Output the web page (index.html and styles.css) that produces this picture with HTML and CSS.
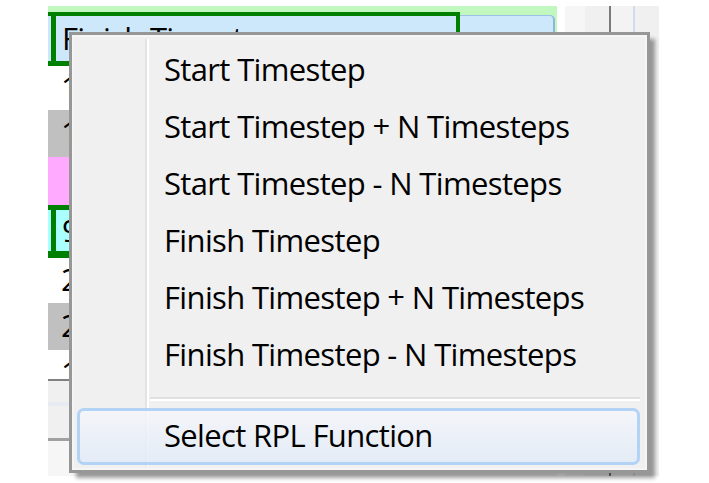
FILE: index.html
```html
<!DOCTYPE html>
<html>
<head>
<meta charset="utf-8">
<link rel="stylesheet" href="styles.css">
</head>
<body>
<div class="sheet">
  <div class="grid">
    <div class="toprow">
      <div class="gbox top">
        <div class="gcell">Finish Timestep</div>
      </div>
      <div class="hovercell"></div>
    </div>
    <div class="row white h44"><span class="txt">1</span></div>
    <div class="row gray h47"><span class="txt">1</span></div>
    <div class="row pink h48"></div>
    <div class="gbox cyan">
      <div class="gcell">9</div>
    </div>
    <div class="row white h45"><span class="txt">2</span></div>
    <div class="row gray h47"><span class="txt">2</span></div>
    <div class="row white cut"><span class="txt">1</span></div>
    <div class="footer">
      <div class="fband"></div>
      <div class="fline"></div>
      <div class="fband2"></div>
    </div>
  </div>
  <div class="side">
    <div class="scol light"></div>
    <div class="scol mid"></div>
    <div class="sline dark"></div>
    <div class="scol light2"></div>
    <div class="sline blue"></div>
    <div class="scol mid"></div>
  </div>
</div>

<div class="menu">
  <div class="item">Start Timestep</div>
  <div class="item">Start Timestep + N Timesteps</div>
  <div class="item">Start Timestep - N Timesteps</div>
  <div class="item">Finish Timestep</div>
  <div class="item">Finish Timestep + N Timesteps</div>
  <div class="item">Finish Timestep - N Timesteps</div>
  <div class="sep"></div>
  <div class="item hl">Select RPL Function</div>
</div>
</body>
</html>
```
FILE: styles.css
```css
html, body {
  margin: 0;
  padding: 0;
  background: #ffffff;
}
body {
  font-family: "Open Sans", "Noto Sans", sans-serif;
  font-size: 31px;
  letter-spacing: -0.65px;
  color: #000;
  width: 709px;
  height: 483px;
  overflow: hidden;
}
.sheet {
  display: flex;
  gap: 8px;
  margin: 6px 0 0 48px;
}
.grid {
  width: 509px;
  display: flex;
  flex-direction: column;
}
.toprow {
  height: 60px;
  background: #c0f8c0;
  display: flex;
  align-items: flex-end;
}
.gbox {
  box-sizing: border-box;
  display: flex;
  border-top: 4px solid #008000;
  border-bottom: 5px solid #008000;
  border-right: 4px solid #008000;
  background: #cce8fa;
}
.gbox.top {
  width: 412px;
  height: 54px;
}
.gbox.cyan {
  width: 509px;
  height: 53px;
  border-top-width: 5px;
  border-bottom-width: 7px;
  border-right: none;
  background: #aaffff;
}
.gcell {
  margin-left: 3px;
  border-left: 5px solid #008000;
  padding-left: 6px;
  display: flex;
  align-items: center;
  padding-bottom: 1px;
  flex: 1;
}
.hovercell {
  box-sizing: border-box;
  width: 95px;
  height: 51px;
  margin-right: 2px;
  background: #cce8fa;
  border-top: 1px solid #9cc0e8;
  border-right: 2px solid #8fb4de;
  border-top-right-radius: 5px;
}
.row {
  display: flex;
  align-items: center;
  overflow: hidden;
  box-sizing: border-box;
}
.txt {
  padding-left: 13px;
  padding-bottom: 3px;
}
.white { background: #ffffff; }
.gray { background: #c0c0c0; }
.pink { background: #ffaaff; }
.h44 { height: 44px; }
.h45 { height: 45px; }
.h47 { height: 47px; }
.h48 { height: 48px; }
.row.cut {
  height: 31px;
  align-items: flex-start;
  border-bottom: 2px solid #808080;
}
.row.cut .txt {
  line-height: 44px;
}
.footer {
  display: flex;
  flex-direction: column;
  height: 95px;
}
.fband {
  height: 57px;
  background: linear-gradient(#f0f0f0 0, #f0f0f0 21px, #e6ecf2 21px, #e6ecf2 25px, #f0f0f0 25px);
}
.fline {
  height: 3px;
  background: #a0a0a0;
}
.fband2 {
  flex: 1;
  background: #f6f6f6;
}
.side {
  width: 94px;
  height: 470px;
  display: flex;
}
.scol { height: 100%; }
.scol.light { width: 20px; background: #f6f6f6; }
.scol.mid { flex: 1; background: #f0f0f0; }
.scol.light2 { width: 22px; background: #f3f3f3; }
.sline { width: 2px; height: 100%; }
.sline.dark { background: #7a7a7a; }
.sline.blue { background: #d0dcea; }

.menu {
  position: absolute;
  left: 69px;
  top: 32px;
  width: 581px;
  height: 441px;
  box-sizing: border-box;
  border: 3px solid #979797;
  padding: 7px 7px 5px 5px;
  background:
    linear-gradient(to right, transparent 73px, #e2e3e3 73px, #e2e3e3 75px, #ffffff 75px, #ffffff 77px, transparent 77px) 0 4px / 100% calc(100% - 8px) no-repeat,
    #f0f0f0;
  box-shadow: inset 0 0 0 2px #f5f5f5, 6px 6px 4px -1px rgba(0, 0, 0, 0.38);
  display: flex;
  flex-direction: column;
}
.item {
  box-sizing: border-box;
  height: 57px;
  border: 3px solid transparent;
  border-radius: 7px;
  padding: 0 0 4px 84px;
  display: flex;
  align-items: center;
  white-space: nowrap;
}
.item.hl {
  border-color: #b2d2f6;
  background: linear-gradient(rgba(244, 246, 250, 0.85), rgba(226, 235, 248, 0.85));
}
.sep {
  height: 4px;
  margin: 13px 0 7px 73px;
  background: linear-gradient(#e0e0e0 0, #e0e0e0 2px, #ffffff 2px);
}
```
